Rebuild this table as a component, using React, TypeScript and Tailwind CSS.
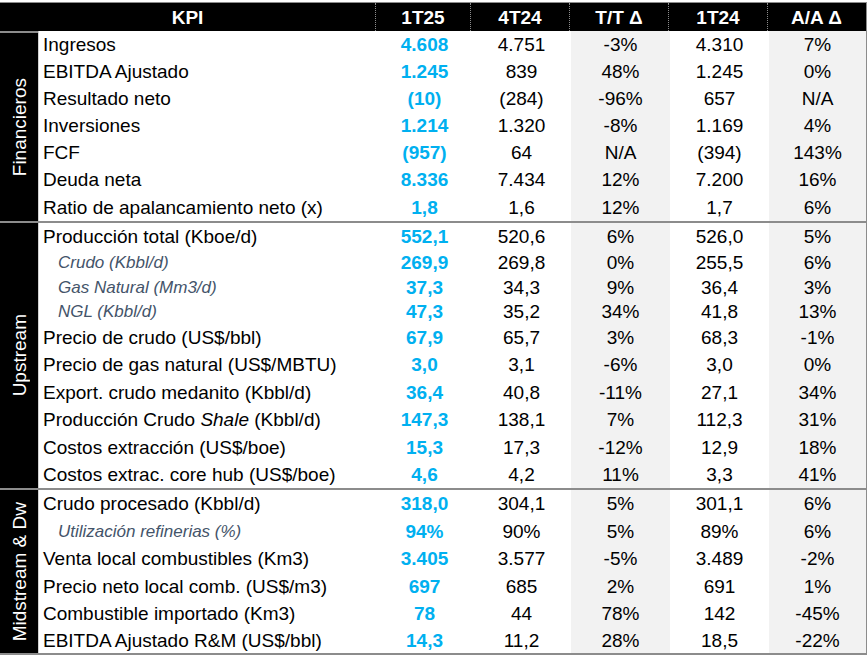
import React from "react";

type Row = {
  label: React.ReactNode;
  v: [string, string, string, string, string];
  sub?: boolean;
  h: string;
};

type Section = {
  name: string;
  rows: Row[];
  first?: boolean;
};

const sections: Section[] = [
  {
    name: "Financieros",
    first: true,
    rows: [
      { label: "Ingresos", v: ["4.608", "4.751", "-3%", "4.310", "7%"], h: "h-[27px]" },
      { label: "EBITDA Ajustado", v: ["1.245", "839", "48%", "1.245", "0%"], h: "h-[27px]" },
      { label: "Resultado neto", v: ["(10)", "(284)", "-96%", "657", "N/A"], h: "h-[27px]" },
      { label: "Inversiones", v: ["1.214", "1.320", "-8%", "1.169", "4%"], h: "h-[27px]" },
      { label: "FCF", v: ["(957)", "64", "N/A", "(394)", "143%"], h: "h-[27px]" },
      { label: "Deuda neta", v: ["8.336", "7.434", "12%", "7.200", "16%"], h: "h-[27px]" },
      { label: "Ratio de apalancamiento neto (x)", v: ["1,8", "1,6", "12%", "1,7", "6%"], h: "h-[28px]" },
    ],
  },
  {
    name: "Upstream",
    rows: [
      { label: "Producción total (Kboe/d)", v: ["552,1", "520,6", "6%", "526,0", "5%"], h: "h-[27px]" },
      { label: "Crudo (Kbbl/d)", v: ["269,9", "269,8", "0%", "255,5", "6%"], sub: true, h: "h-[25px]" },
      { label: "Gas Natural (Mm3/d)", v: ["37,3", "34,3", "9%", "36,4", "3%"], sub: true, h: "h-[24px]" },
      { label: "NGL (Kbbl/d)", v: ["47,3", "35,2", "34%", "41,8", "13%"], sub: true, h: "h-[25px]" },
      { label: "Precio de crudo (US$/bbl)", v: ["67,9", "65,7", "3%", "68,3", "-1%"], h: "h-[27px]" },
      { label: "Precio de gas natural (US$/MBTU)", v: ["3,0", "3,1", "-6%", "3,0", "0%"], h: "h-[27px]" },
      { label: "Export. crudo medanito (Kbbl/d)", v: ["36,4", "40,8", "-11%", "27,1", "34%"], h: "h-[28px]" },
      {
        label: (
          <>
            Producción Crudo <span className="italic">Shale</span> (Kbbl/d)
          </>
        ),
        v: ["147,3", "138,1", "7%", "112,3", "31%"],
        h: "h-[27px]",
      },
      { label: "Costos extracción (US$/boe)", v: ["15,3", "17,3", "-12%", "12,9", "18%"], h: "h-[28px]" },
      { label: "Costos extrac. core hub (US$/boe)", v: ["4,6", "4,2", "11%", "3,3", "41%"], h: "h-[27px]" },
    ],
  },
  {
    name: "Midstream & Dw",
    rows: [
      { label: "Crudo procesado (Kbbl/d)", v: ["318,0", "304,1", "5%", "301,1", "6%"], h: "h-[27px]" },
      { label: "Utilización refinerias (%)", v: ["94%", "90%", "5%", "89%", "6%"], sub: true, h: "h-[28px]" },
      { label: "Venta local combustibles (Km3)", v: ["3.405", "3.577", "-5%", "3.489", "-2%"], h: "h-[27px]" },
      { label: "Precio neto local comb. (US$/m3)", v: ["697", "685", "2%", "691", "1%"], h: "h-[28px]" },
      { label: "Combustible importado (Km3)", v: ["78", "44", "78%", "142", "-45%"], h: "h-[27px]" },
      { label: "EBITDA Ajustado R&M (US$/bbl)", v: ["14,3", "11,2", "28%", "18,5", "-22%"], h: "h-[26px]" },
    ],
  },
];

const colW = ["w-[95px]", "w-[99px]", "w-[99px]", "w-[99px]", "w-[97px]"];
const heads = ["1T25", "4T24", "T/T Δ", "1T24", "A/A Δ"];

function DataRow({ row }: { row: Row }) {
  return (
    <div className={`flex items-center ${row.h}`}>
      <div
        className={
          row.sub
            ? "w-[338px] pl-[19px] text-[17px] italic text-[#44546a] whitespace-nowrap"
            : "w-[338px] pl-[4px] text-[19px] text-black whitespace-nowrap"
        }
      >
        {row.label}
      </div>
      {row.v.map((val, i) => (
        <div
          key={i}
          className={`${colW[i]} h-full flex items-center justify-center text-[19px] ${
            i === 0 ? "font-bold text-[#00b0f0]" : "text-black"
          } ${i === 2 || i === 4 ? "bg-[#f2f2f2]" : ""}`}
        >
          {val}
        </div>
      ))}
    </div>
  );
}

export default function App() {
  return (
    <div className="w-[868px] h-[659px] bg-white pt-[2px] font-['Liberation_Sans',Arial,sans-serif] leading-none">
      <div className="w-[867px] border-t border-r border-[#8c8c8c]">
        {/* header */}
        <div className="flex h-[28px] bg-black text-white font-bold text-[19px]">
          <div className="w-[376px] flex items-center justify-center border-r border-dotted border-[#8c8c8c]">
            KPI
          </div>
          {heads.map((h, i) => (
            <div
              key={h}
              className={`${colW[i]} flex items-center justify-center ${
                i < 4 ? "border-r border-dotted border-[#8c8c8c]" : ""
              }`}
            >
              {h}
            </div>
          ))}
        </div>

        {sections.map((s) => (
          <div
            key={s.name}
            className={s.first ? "flex" : "flex border-t-2 border-[#8c8c8c]"}
          >
            <div
              className={`w-[38px] bg-black flex items-center justify-center ${
                s.first ? "border-t-2 border-[#8c8c8c]" : ""
              }`}
            >
              <span className="[writing-mode:vertical-rl] rotate-180 text-white text-[19px] whitespace-nowrap">
                {s.name}
              </span>
            </div>
            <div className="flex flex-col border-l border-[#d0d0d0]">
              {s.rows.map((r, i) => (
                <DataRow key={i} row={r} />
              ))}
            </div>
          </div>
        ))}
        <div className="border-t-2 border-[#8c8c8c]" />
      </div>
    </div>
  );
}
